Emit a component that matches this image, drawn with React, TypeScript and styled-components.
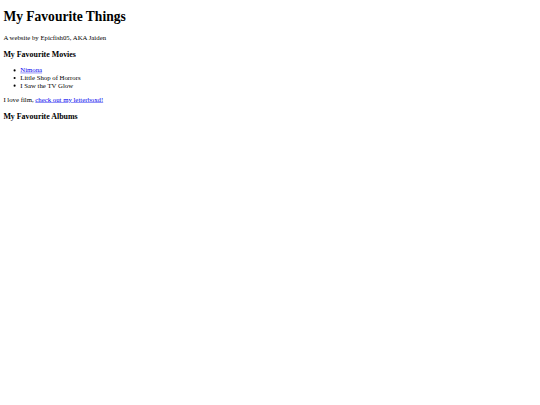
import * as React from 'react';
import styled, { createGlobalStyle } from 'styled-components';

const SCALE = 0.423;

const GlobalStyle = createGlobalStyle`
    body {
        margin: 0;
        background: #fff;
        overflow: hidden;
    }
`;

const Viewport = styled.div`
    width: ${540 / SCALE}px;
    transform: scale(${SCALE});
    transform-origin: 0 0;
    padding-top: 0.02px;
`;

const Page = styled.main`
    margin: 8px;
    font-family: 'Liberation Serif', 'Times New Roman', serif;
    font-size: 16px;
    line-height: normal;
    color: #000;
`;

const Title = styled.h1`
    font-size: 32px;
    font-weight: bold;
    margin: 0.67em 0;
`;

const Paragraph = styled.p`
    margin: 1em 0;
`;

const SectionHeading = styled.h3`
    font-size: 1.17em;
    font-weight: bold;
    margin: 1em 0;
`;

const List = styled.ul`
    list-style: disc;
    margin: 1em 0;
    padding-left: 40px;
`;

const Item = styled.li``;

const Link = styled.a`
    color: #0000ee;
    text-decoration: underline;
`;

const movies = [
    { title: 'Nimona', href: '#nimona' },
    { title: 'Little Shop of Horrors' },
    { title: 'I Saw the TV Glow' }
];

const App = () => {
    return (
        <>
            <GlobalStyle />
            <Viewport>
                <Page>
                    <Title>My Favourite Things</Title>
                    <Paragraph>A website by Epicfish05, AKA Jaiden</Paragraph>
                    <SectionHeading>My Favourite Movies</SectionHeading>
                    <List>
                        {movies.map(movie => (
                            <Item key={movie.title}>
                                {movie.href
                                    ? <Link href={movie.href}>{movie.title}</Link>
                                    : movie.title}
                            </Item>
                        ))}
                    </List>
                    <Paragraph>
                        I love film, <Link href="#letterboxd">check out my letterboxd!</Link>
                    </Paragraph>
                    <SectionHeading>My Favourite Albums</SectionHeading>
                </Page>
            </Viewport>
        </>
    );
};

export default App;
